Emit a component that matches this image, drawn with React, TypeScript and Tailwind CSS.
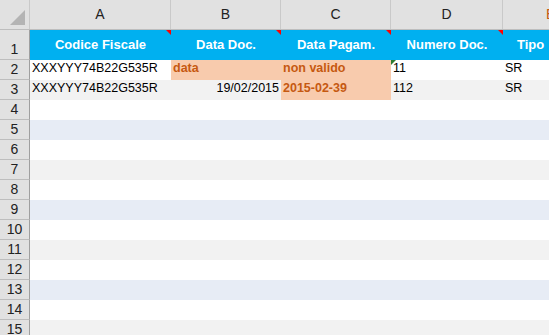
import React from "react";

const COLS = ["A", "B", "C", "D", "E"];
const WIDTHS = ["w-[141px]", "w-[110px]", "w-[110px]", "w-[112px]", "w-[60px]"];

type Cell = { text?: string; align?: "left" | "right" | "center"; warn?: boolean; green?: boolean };

const ROWS: Cell[][] = [
  [{ text: "XXXYYY74B22G535R" }, { text: "data", warn: true }, { text: "non valido", warn: true }, { text: "11", green: true }, { text: "SR" }],
  [{ text: "XXXYYY74B22G535R" }, { text: "19/02/2015", align: "right" }, { text: "2015-02-39", warn: true }, { text: "112" }, { text: "SR" }],
];

const HEADERS = ["Codice Fiscale", "Data Doc.", "Data Pagam.", "Numero Doc.", "Tipo"];

function stripe(row: number) {
  if (row % 2 === 0) return "bg-white";
  if (row % 4 === 1) return "bg-[#e7ecf5]";
  return "bg-[#f2f2f2]";
}

function RowHead({ n, tall }: { n: number; tall?: boolean }) {
  return (
    <div
      className={`w-[30px] shrink-0 ${tall ? "h-[30px]" : "h-[20px]"} bg-[#e1e1e1] border-r border-b border-r-[#9f9f9f] border-b-[#bdbdbd] flex items-end justify-center text-[14px] leading-[19px] text-[#222]`}
    >
      {n}
    </div>
  );
}

export default function App() {
  return (
    <div className="w-[549px] h-[335px] overflow-hidden bg-white font-['Liberation_Sans',Arial,sans-serif] text-[12.5px] text-black">
      {/* column letters */}
      <div className="flex h-[30px] bg-[#e1e1e1] border-b border-[#bdbdbd]">
        <div className="relative w-[30px] shrink-0 border-r border-[#c9c9c9]">
          <div className="absolute right-[4px] bottom-[4px] w-0 h-0 border-l-[15px] border-l-transparent border-b-[15px] border-b-[#b4b4b4]" />
        </div>
        {COLS.map((c, i) => (
          <div
            key={c}
            className={`${WIDTHS[i]} shrink-0 border-r border-[#c9c9c9] flex items-center justify-center text-[14px] ${i === 4 ? "text-[#c65911] justify-start pl-[43px]" : "text-[#222]"}`}
          >
            {c}
          </div>
        ))}
      </div>

      {/* header row */}
      <div className="flex">
        <RowHead n={1} tall />
        {HEADERS.map((h, i) => (
          <div
            key={h}
            className={`relative ${WIDTHS[i]} shrink-0 h-[30px] bg-[#00b0f0] flex items-center ${i === 4 ? "justify-start pl-[14px]" : "justify-center"} text-white font-bold text-[13px]`}
          >
            {h}
            {i < 4 && (
              <div className="absolute right-0 top-0 w-0 h-0 border-l-[5px] border-l-transparent border-t-[5px] border-t-[#ff0000]" />
            )}
          </div>
        ))}
      </div>

      {/* data rows */}
      {Array.from({ length: 14 }, (_, r) => {
        const n = r + 2;
        const cells = ROWS[r];
        return (
          <div key={n} className="flex">
            <RowHead n={n} />
            {COLS.map((c, i) => {
              const cell = cells?.[i];
              const bg = cell?.warn ? "bg-[#f8cbad] text-[#c65911] font-bold" : stripe(n);
              return (
                <div
                  key={c}
                  className={`relative ${WIDTHS[i]} shrink-0 h-[20px] ${bg} flex items-end pb-[2px] px-[2px] ${cell?.align === "right" ? "justify-end" : "justify-start"}`}
                >
                  {cell?.text}
                  {cell?.green && (
                    <div className="absolute left-0 top-0 w-0 h-0 border-r-[5px] border-r-transparent border-t-[5px] border-t-[#2e7d32]" />
                  )}
                </div>
              );
            })}
          </div>
        );
      })}
    </div>
  );
}
